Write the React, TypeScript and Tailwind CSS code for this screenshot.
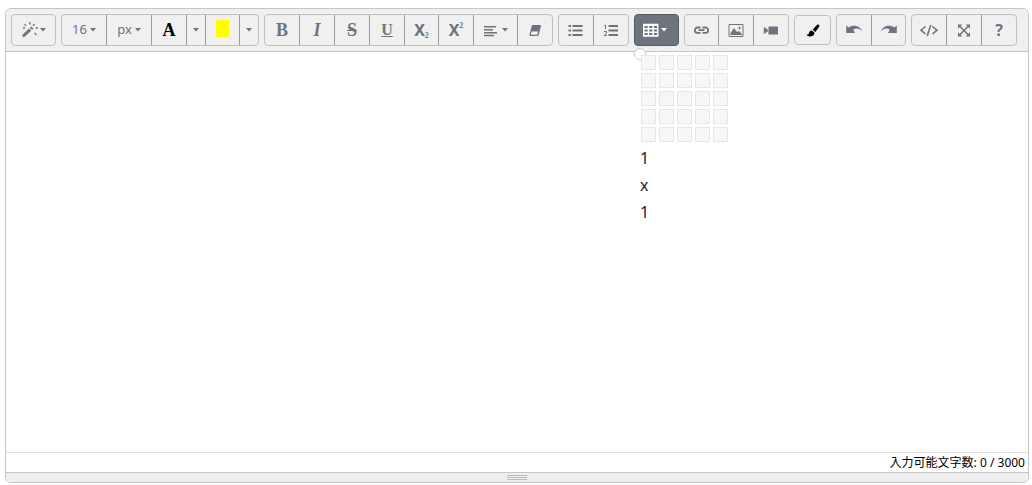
import { useState } from 'react';
import type { ReactNode } from 'react';
import clsx from 'clsx';

const MAX_LENGTH = 3000;
const GRID_SIZE = 5;

interface ToolButtonProps {
  label: string;
  className: string;
  children: ReactNode;
}

function ToolGroup({ children }: { children: ReactNode }) {
  return (
    <div className="flex h-8 divide-x divide-[#999] rounded border border-[#bfbfbf] text-[#6c757d]">
      {children}
    </div>
  );
}

function ToolButton({ label, className, children }: ToolButtonProps) {
  return (
    <button
      type="button"
      title={label}
      aria-label={label}
      className={clsx('flex items-center justify-center hover:bg-black/5', className)}
    >
      {children}
    </button>
  );
}

function Caret() {
  return (
    <svg width="6" height="4" viewBox="0 0 6 4" fill="currentColor" aria-hidden="true">
      <path d="M0 0h6L3 3.4z" />
    </svg>
  );
}

function Icon({ children }: { children: ReactNode }) {
  return (
    <svg width="18" height="16" viewBox="0 0 18 16" fill="currentColor" aria-hidden="true">
      {children}
    </svg>
  );
}

function WandIcon() {
  return (
    <Icon>
      <path d="M1.800 15.500 0 13.200l7-6.700 2.200 2.300z" />
      <path d="m7.900 5.700 1.300-1.200 2.200 2.300L10 8z" />
      <path
        d="M2.500 2.200 4.200 3.900M7.800 0v2.500M12.700 2 11 3.700M13.500 6h2.500M12.500 11l2 2M1 6h2"
        fill="none"
        stroke="currentColor"
        strokeWidth="1.300"
      />
    </Icon>
  );
}

function AlignIcon() {
  return (
    <Icon>
      <path d="M0 4h12v1.500H0zM0 7h9v1.500H0zM0 10h13v1.500H0zM0 12.700h10v1.500H0z" />
    </Icon>
  );
}

function EraserIcon() {
  return (
    <Icon>
      <path d="M6.800 3h7.400q.9 0 .7.900L12.700 13q-.3 1-1.200 1H4.200q-.9 0-.7-.9L5.700 4q.2-1 1.100-1z" />
      <path d="M5.700 9.500H12l-.8 3.300H4.900z" fill="#f5f5f5" />
    </Icon>
  );
}

function BulletListIcon() {
  return (
    <Icon>
      <path d="M1.500 3H4v2H1.500zM1.500 7.500H4v2H1.500zM1.500 12H4v2H1.500zM5.500 3h10v2h-10zM5.500 7.500h10v2h-10zM5.500 12h10v2h-10z" />
    </Icon>
  );
}

function NumberListIcon() {
  return (
    <Icon>
      <path d="M6.500 3H16v2H6.500zM6.500 7.500H16v2H6.500zM6.500 12H16v2H6.500z" />
      <path
        d="M2.300 3.500 3.500 3v4M2 9.500h2.500V11l-2.200 2.500H5"
        fill="none"
        stroke="currentColor"
      />
    </Icon>
  );
}

function TableIcon() {
  return (
    <Icon>
      <path
        fillRule="evenodd"
        d="M0 1.700h15.500v13H0zM1.500 4v2h3.200V4zM6.200 4v2h3.200V4zM10.900 4v2h3.200V4zM1.500 7.500v2h3.200v-2zM6.200 7.500v2h3.200v-2zM10.900 7.500v2h3.200v-2zM1.500 11v2h3.200v-2zM6.200 11v2h3.200v-2zM10.900 11v2h3.200v-2z"
      />
    </Icon>
  );
}

function LinkIcon() {
  return (
    <Icon>
      <path
        d="M7.500 5.500h-3a2.700 2.700 0 0 0 0 5.400h3M9.500 5.500h3a2.700 2.700 0 0 1 0 5.400h-3M5.500 8.200h6"
        fill="none"
        stroke="currentColor"
        strokeWidth="1.800"
      />
    </Icon>
  );
}

function ImageIcon() {
  return (
    <Icon>
      <path d="M2 2.500h14v12H2z" fill="none" stroke="currentColor" />
      <path d="M3.500 13v-2L7 6l3.200 4.300 1.500-1.500 3 3V13zM12.500 4l.6 1.400 1.400.6-1.400.6-.6 1.400-.6-1.400-1.400-.6 1.400-.6z" />
    </Icon>
  );
}

function VideoIcon() {
  return (
    <Icon>
      <path d="M6.500 4.500H16v8H6.500zM1.800 5 5.800 7.500v2l-4 2.500z" />
    </Icon>
  );
}

function BrushIcon() {
  return (
    <Icon>
      <path d="M14.600 2.500c.9.5 1 1.400.4 2.500l-3.600 5-2.800-2.200 3.800-4.400c.7-.8 1.500-1.200 2.200-.9zM7.800 8.500l2.600 2.100c.4 2.300-1.700 4.200-4.600 3.900-1.500-.1-2.800-.8-3.300-2 1.600.4 2.100-.3 2.600-1.800.4-1.300 1.400-2.200 2.700-2.200z" />
    </Icon>
  );
}

function UndoIcon() {
  return (
    <Icon>
      <path d="M1.200 3.500 3.500 5.400C7.300 2.600 14.600 2.600 17.500 9.500c-3.200-3.600-6.800-3.700-9.200-1.800L10 11H1.200z" />
    </Icon>
  );
}

function RedoIcon() {
  return (
    <Icon>
      <path d="M16.800 3.500 14.500 5.400C10.700 2.600 3.400 2.600.5 9.500c3.200-3.600 6.800-3.700 9.200-1.800L8 11h8.800z" />
    </Icon>
  );
}

function CodeIcon() {
  return (
    <svg width="20" height="16" viewBox="0 0 20 16" fill="none" aria-hidden="true">
      <path
        d="M6.500 4.500 2 8.200 6.500 12M13.500 4.500 18 8.200 13.500 12M11.800 3 8.200 14"
        stroke="currentColor"
        strokeWidth="1.600"
      />
    </svg>
  );
}

function FullscreenIcon() {
  return (
    <Icon>
      <path d="m4.500 4 9 9M13.500 4l-9 9" stroke="currentColor" strokeWidth="1.500" />
      <path d="M3 2.500h4.300L3 6.800zM15 2.500v4.300l-4.300-4.300zM3 14.500v-4.300l4.300 4.300zM15 14.500h-4.300l4.300-4.300z" />
    </Icon>
  );
}

function TablePicker({ onPick }: { onPick: (cols: number, rows: number) => void }) {
  const [size, setSize] = useState({ cols: 1, rows: 1 });

  return (
    <div className="absolute top-[33px] left-[-1px] z-10 w-24">
      <span className="absolute size-3 rounded-full border border-[#ccc] bg-white" />
      <div className="relative grid grid-cols-[repeat(5,15px)] gap-[3px] pt-[7px] pl-[7px]">
        {Array.from({ length: GRID_SIZE * GRID_SIZE }, (_, i) => {
          const cols = (i % GRID_SIZE) + 1;
          const rows = Math.floor(i / GRID_SIZE) + 1;
          return (
            <button
              key={i}
              type="button"
              aria-label={`${cols} x ${rows}`}
              onMouseEnter={() => setSize({ cols, rows })}
              onClick={() => onPick(cols, rows)}
              className="size-[15px] border border-[#e7e7e7] bg-[#f7f7f7] hover:border-[#6c757d]"
            />
          );
        })}
      </div>
      <div className="pt-[3px] pl-[6px] text-base leading-[27px] text-[#212529]">
        <div>{size.cols}</div>
        <div>x</div>
        <div>{size.rows}</div>
      </div>
    </div>
  );
}

export default function App() {
  const [text, setText] = useState('');
  const [showPicker, setShowPicker] = useState(true);

  return (
    <div className="bg-white pt-2 pr-[3px] pl-[5px] font-['Noto_Sans','Noto_Sans_CJK_JP',sans-serif]">
      <div className="rounded-md border border-[#c5c5c5]">
        {/* Toolbar */}
        <div
          role="toolbar"
          className="flex flex-wrap items-center gap-[5px] rounded-t-md border-b border-[#c5c5c5] bg-[#f0f0f0] p-[5px]"
        >
          <ToolGroup>
            <ToolButton label="Style" className="w-[43px]">
              <WandIcon />
              <Caret />
            </ToolButton>
          </ToolGroup>

          <ToolGroup>
            <ToolButton label="Font size" className="w-[45px] gap-[3px] text-[13px]">
              16
              <Caret />
            </ToolButton>
            <ToolButton label="Font size unit" className="w-[45px] gap-[3px] text-[13px]">
              px
              <Caret />
            </ToolButton>
            <ToolButton label="Text color" className="w-[35px] font-['Liberation_Serif',serif] text-lg font-bold text-black">
              A
            </ToolButton>
            <ToolButton label="More text colors" className="w-[19px]">
              <Caret />
            </ToolButton>
            <ToolButton label="Highlight color" className="w-[34px]">
              <span className="mb-[3px] h-[17px] w-[13px] bg-[#ff0]" />
            </ToolButton>
            <ToolButton label="More highlight colors" className="w-[18px]">
              <Caret />
            </ToolButton>
          </ToolGroup>

          <ToolGroup>
            <ToolButton label="Bold" className="w-[35px] font-['Liberation_Serif',serif] text-lg font-bold">
              B
            </ToolButton>
            <ToolButton label="Italic" className="w-[35px] font-['Liberation_Serif',serif] text-lg font-bold italic">
              I
            </ToolButton>
            <ToolButton label="Strikethrough" className="w-[35px] font-['Liberation_Serif',serif] text-lg font-bold">
              <s className="px-px">S</s>
            </ToolButton>
            <ToolButton label="Underline" className="w-[35px] font-['Liberation_Serif',serif] text-base font-bold">
              <u>U</u>
            </ToolButton>
            <ToolButton label="Subscript" className="w-[34px] text-base font-bold">
              X
              <span className="pt-3 font-['Liberation_Serif',serif] text-[8px] leading-none">2</span>
            </ToolButton>
            <ToolButton label="Superscript" className="w-[35px] text-base font-bold">
              X
              <span className="pb-2 font-['Liberation_Serif',serif] text-[8px] leading-none">2</span>
            </ToolButton>
            <ToolButton label="Paragraph" className="w-[44px]">
              <AlignIcon />
              <Caret />
            </ToolButton>
            <ToolButton label="Clear formatting" className="w-[34px]">
              <EraserIcon />
            </ToolButton>
          </ToolGroup>

          <ToolGroup>
            <ToolButton label="Unordered list" className="w-[35px]">
              <BulletListIcon />
            </ToolButton>
            <ToolButton label="Ordered list" className="w-[34px]">
              <NumberListIcon />
            </ToolButton>
          </ToolGroup>

          {/* Table button with its size picker */}
          <div className="relative h-8 rounded border border-[#545b62] bg-[#6c757d] text-white">
            <button
              type="button"
              title="Table"
              aria-label="Table"
              aria-expanded={showPicker}
              onClick={() => setShowPicker(!showPicker)}
              className="flex h-full w-[43px] items-center justify-center pr-[3px]"
            >
              <TableIcon />
              <Caret />
            </button>
            {showPicker && <TablePicker onPick={() => setShowPicker(false)} />}
          </div>

          <ToolGroup>
            <ToolButton label="Link" className="w-[34px]">
              <LinkIcon />
            </ToolButton>
            <ToolButton label="Picture" className="w-[35px]">
              <ImageIcon />
            </ToolButton>
            <ToolButton label="Video" className="w-[34px]">
              <VideoIcon />
            </ToolButton>
          </ToolGroup>

          <div className="flex h-[30px] rounded border border-[#bfbfbf] text-black">
            <ToolButton label="Copy format" className="w-[35px]">
              <BrushIcon />
            </ToolButton>
          </div>

          <ToolGroup>
            <ToolButton label="Undo" className="w-[35px]">
              <UndoIcon />
            </ToolButton>
            <ToolButton label="Redo" className="w-[33px]">
              <RedoIcon />
            </ToolButton>
          </ToolGroup>

          <ToolGroup>
            <ToolButton label="Code view" className="w-[35px]">
              <CodeIcon />
            </ToolButton>
            <ToolButton label="Full screen" className="w-[35px]">
              <FullscreenIcon />
            </ToolButton>
            <ToolButton label="Help" className="w-[34px] text-base font-bold">
              ?
            </ToolButton>
          </ToolGroup>
        </div>

        {/* Editing area */}
        <textarea
          aria-label="Editor"
          value={text}
          maxLength={MAX_LENGTH}
          onChange={(e) => setText(e.target.value)}
          className="block h-100 w-full resize-none p-2.5 text-base outline-none"
        />

        <div className="border-t border-[#e0e0e0] pr-[3px] text-right text-xs leading-[19px] text-black">
          入力可能文字数: {text.length} / {MAX_LENGTH}
        </div>

        {/* Resize handle */}
        <div className="flex cursor-ns-resize flex-col items-center gap-px rounded-b-md border-t border-[#c5c5c5] bg-[#efefef] pt-[2px] pb-[2px]">
          <span className="h-px w-5 bg-[#bbb]" />
          <span className="h-px w-5 bg-[#bbb]" />
          <span className="h-px w-5 bg-[#bbb]" />
        </div>
      </div>
    </div>
  );
}
